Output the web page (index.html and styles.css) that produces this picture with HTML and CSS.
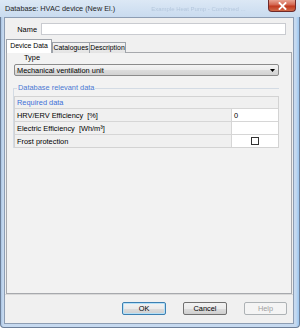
FILE: index.html
```html
<!DOCTYPE html>
<html>
<head>
<meta charset="utf-8">
<link rel="stylesheet" href="styles.css">
</head>
<body>
<div class="window">
  <div class="titlebar">
    <span class="title">Database: HVAC device (New El.)</span>
    <span class="ghost">Example Heat Pump - Combined ...</span>
    <div class="close">
      <svg width="9" height="8" viewBox="0 0 9 8"><path d="M1.5 1 L7.5 7 M7.5 1 L1.5 7" stroke="#fff" stroke-width="1.8" stroke-linecap="square"/></svg>
    </div>
  </div>
  <div class="client">
    <div class="name-row">
      <span class="name-label">Name</span>
      <div class="text-input"></div>
    </div>
    <div class="tabs">
      <div class="tab active">Device Data</div>
      <div class="tab">Catalogues</div>
      <div class="tab">Description</div>
    </div>
    <div class="panel">
      <div class="type-label">Type</div>
      <div class="combo">
        <span>Mechanical ventilation unit</span>
        <svg class="arrow" width="5" height="3" viewBox="0 0 5 3"><path d="M0 0 H5 L2.5 3 Z" fill="#000"/></svg>
      </div>
      <div class="group">
        <span class="group-label">Database relevant data</span>
        <div class="grid">
          <div class="row head"><div class="cell label req">Required data</div></div>
          <div class="row"><div class="cell label">HRV/ERV Efficiency&nbsp; [%]</div><div class="cell value">0</div></div>
          <div class="row"><div class="cell label">Electric Efficiency&nbsp; [Wh/m³]</div><div class="cell value"></div></div>
          <div class="row"><div class="cell label">Frost protection</div><div class="cell value center"><span class="check"></span></div></div>
        </div>
      </div>
    </div>
    <div class="footer">
      <div class="btn default">OK</div>
      <div class="btn">Cancel</div>
      <div class="btn disabled">Help</div>
    </div>
  </div>
</div>
</body>
</html>
```
FILE: styles.css
```css
* { box-sizing: border-box; }
html, body { margin: 0; padding: 0; }
body {
  width: 300px;
  height: 328px;
  overflow: hidden;
  font-family: "Liberation Sans", Arial, sans-serif;
  font-size: 7.4px;
  color: #000;
  background: #fff;
}
.window {
  width: 300px;
  height: 328px;
  display: flex;
  flex-direction: column;
  background: linear-gradient(90deg, #a9c4e2 0px, #c6d9ef 2px, #c6d9ef 295px, #a7cdf2 297px, #8fb6de 300px);
  border: 1px solid #6d7f99;
  border-top: none;
  border-radius: 0 0 4px 4px;
}
.titlebar {
  height: 17px;
  flex: none;
  display: flex;
  align-items: flex-start;
  background: linear-gradient(180deg, #dce8f5 0%, #c9dbef 100%);
  margin: 0 -1px;
}
.title {
  padding: 4px 0 0 5px;
  font-size: 7.3px;
  color: #1e1e1e;
  white-space: nowrap;
}
.ghost {
  margin: 6px 0 0 36px;
  font-size: 6px;
  color: #b4c7dd;
  filter: blur(0.7px);
  white-space: nowrap;
}
.close {
  margin-left: auto;
  margin-right: 4px;
  width: 28px;
  height: 12px;
  border: 1px solid #6e2a2a;
  border-top: none;
  border-radius: 0 0 4px 4px;
  background: linear-gradient(180deg, #e8a493 0%, #d3654f 45%, #c0391f 55%, #d06a4a 100%);
  display: flex;
  align-items: center;
  justify-content: center;
}
.client {
  flex: 1;
  margin: 0 5px 3px 3px;
  border: 1px solid #8d9db3;
  background: #f0f0f0;
  display: flex;
  flex-direction: column;
}
.name-row {
  flex: none;
  display: flex;
  align-items: center;
  margin-top: 5px;
  height: 12px;
}
.name-label {
  width: 36px;
  text-align: right;
  padding-right: 4px;
}
.text-input {
  width: 245px;
  height: 12px;
  background: #fff;
  border: 1px solid #c9cbd0;
}
.tabs {
  flex: none;
  display: flex;
  align-items: flex-end;
  margin-top: 5px;
  height: 12px;
  padding-left: 1px;
  position: relative;
  z-index: 1;
}
.tab {
  height: 11px;
  margin-bottom: -1px;
  padding: 0;
  border: 1px solid #9ea3aa;
  border-bottom: none;
  background: linear-gradient(180deg, #f3f3f3 0%, #e3e3e3 100%);
  line-height: 10px;
  font-size: 6.9px;
  margin-right: -1px;
  white-space: nowrap;
  text-align: center;
}
.tab.active {
  height: 14px;
  background: #fff;
  padding-top: 1px;
  margin-right: 0;
  width: 46px;
}
.tab:nth-child(2) { width: 38px; }
.tab:nth-child(3) { width: 37px; }
.panel {
  flex: none;
  margin: 0 1px 0 1px;
  height: 242px;
  border: 1px solid #a7a9ad;
  background: #f2f2f2;
  padding: 0 12px 0 7px;
}
.type-label {
  padding-left: 10px;
  height: 11px;
  line-height: 9px;
}
.combo {
  height: 12px;
  border: 1px solid #8b8b8b;
  border-radius: 2px;
  background: linear-gradient(180deg, #f4f4f4 0%, #ebebeb 50%, #dcdcdc 51%, #d2d2d2 100%);
  display: flex;
  align-items: center;
  padding: 0 3px 0 2px;
}
.combo .arrow { margin-left: auto; }
.group {
  margin-top: 12px;
  position: relative;
  border-top: 1px solid #d3dbe4;
  border-left: 1px solid #d3dbe4;
  margin-left: -1px;
}
.group-label {
  position: absolute;
  top: -5px;
  left: 3px;
  padding: 0 1px;
  background: #f2f2f2;
  color: #4b79d2;
  line-height: 8px;
}
.grid {
  margin-top: 7px;
  border: 1px solid #d3d3d3;
}
.row {
  display: flex;
  height: 13px;
  border-top: 1px solid #d6d6d6;
}
.row.head { height: 11px; border-top: none; }
.cell {
  display: flex;
  align-items: center;
  padding-left: 2px;
  white-space: nowrap;
}
.cell.label { flex: 1; background: #f0f0f0; }
.cell.req { color: #3c6fd8; }
.cell.value {
  width: 47px;
  background: #fff;
  border-left: 1px solid #d6d6d6;
  padding-left: 2px;
}
.cell.center { justify-content: center; padding-left: 0; }
.check {
  width: 8px;
  height: 8px;
  border: 1px solid #333;
  background: #fff;
}
.footer {
  flex: 1;
  border-top: 1px solid #d9d9d9;
  display: flex;
  justify-content: flex-end;
  align-items: flex-start;
  padding: 7px 6px 0 0;
  gap: 17px;
}
.btn {
  width: 44px;
  height: 13px;
  border: 1px solid #707070;
  border-radius: 2px;
  background: linear-gradient(180deg, #f2f2f2 0%, #ebebeb 50%, #dddddd 51%, #cfcfcf 100%);
  display: flex;
  align-items: center;
  justify-content: center;
}
.btn.default {
  border-color: #3c7fb1;
  box-shadow: inset 0 0 0 1px #b5e0f7;
}
.btn.disabled {
  width: 43px;
  border-color: #adb2b5;
  background: #f4f4f4;
  color: #a0a0a0;
}
```
